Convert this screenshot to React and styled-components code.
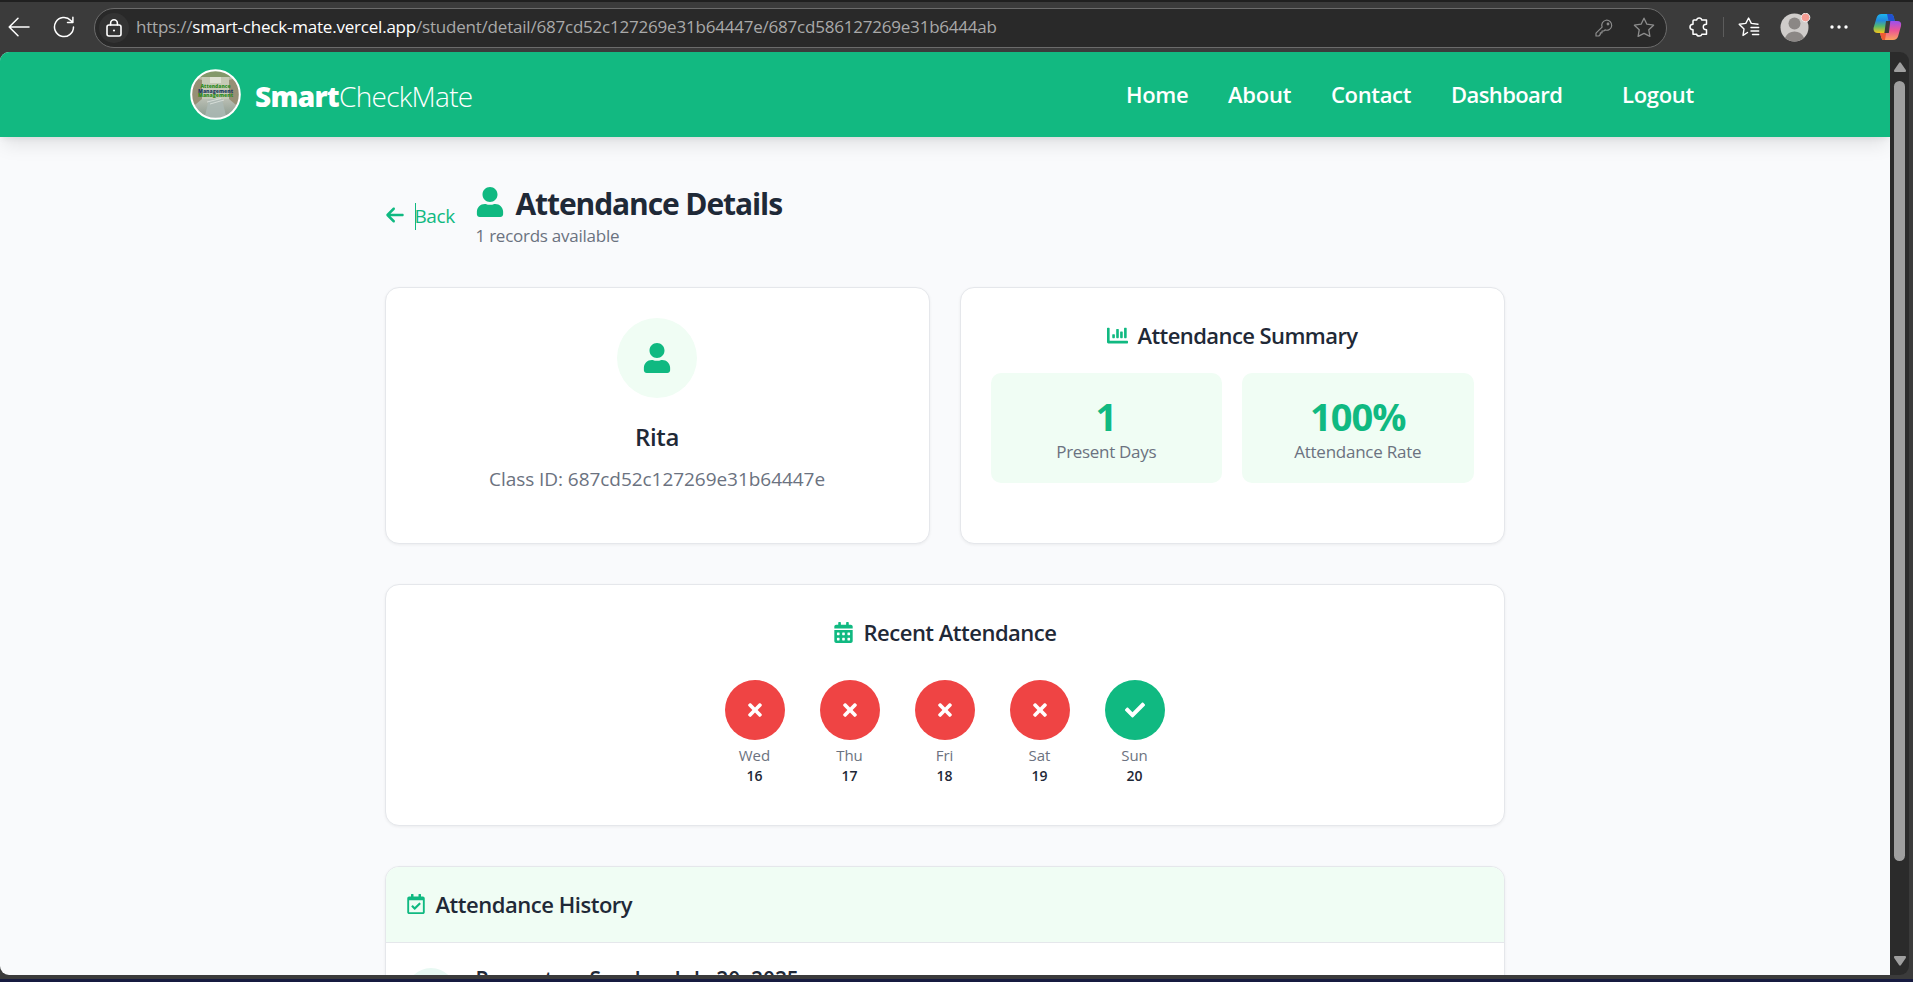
import React from "react";
import styled, { createGlobalStyle } from "styled-components";
import { FaUser, FaCheck, FaTimes, FaRegCalendarCheck, FaCalendarAlt, FaChartBar } from "react-icons/fa";
import { FaArrowLeft } from "react-icons/fa6";

const Global = createGlobalStyle`
  * { box-sizing: border-box; }
  body { margin: 0; background: #3b3b3b; overflow: hidden; }
  #root { font-family: "Open Sans", "Noto Sans", sans-serif; color: #1f2937; }
  h1, h2, h3, p { margin: 0; }
`;

const Text = styled.span`
  white-space: nowrap;
  letter-spacing: ${(p) => p.$ls || 0}px;
`;

const Window = styled.div`
  width: 1913px;
  height: 982px;
  display: flex;
  flex-direction: column;
  overflow: hidden;
  background: #3b3b3b;
`;

const Toolbar = styled.div`
  flex: none;
  height: 52px;
  display: flex;
  align-items: center;
  border-top: 2px solid #202020;
  background: #3b3b3b;
  color: #fff;
  svg { display: block; flex: none; }
`;

const BackButton = styled.div`
  margin-left: 8px;
  width: 45px;
`;

const ReloadButton = styled.div`
  width: 41px;
`;

const AddressBar = styled.div`
  width: 1573px;
  height: 40px;
  margin-top: 1px;
  border: 1px solid #6b6b6b;
  border-radius: 20px;
  background: #292929;
  display: flex;
  align-items: center;
  padding: 0 11px 0 4px;
`;

const LockBadge = styled.div`
  width: 30px;
  height: 30px;
  border-radius: 50%;
  background: #333;
  display: grid;
  place-items: center;
`;

const Url = styled.div`
  flex: 1;
  margin-left: 7px;
  padding-bottom: 2px;
  font-size: 17px;
  line-height: 24px;
  letter-spacing: -0.21px;
  color: #a9a9a9;
  white-space: nowrap;
  b { font-weight: 400; color: #fff; }
`;

const AddressIcons = styled.div`
  display: flex;
  align-items: center;
  gap: 20px;
`;

const ToolIcons = styled.div`
  display: flex;
  align-items: center;
  margin-left: 22px;
`;

const ToolButton = styled.div`
  margin-left: ${(p) => p.$gap || 0}px;
`;

const Divider = styled.div`
  width: 1px;
  height: 20px;
  background: #5c5c5c;
  margin: 0 14px;
`;

const Viewport = styled.div`
  flex: none;
  height: 923px;
  display: flex;
`;

const Page = styled.div`
  width: 1890px;
  height: 923px;
  background: #f9fafc;
  border-radius: 9px 0 0 9px;
  overflow: hidden;
`;

const Header = styled.header`
  height: 85px;
  padding: 0 195px 0 190px;
  background: #12b981;
  box-shadow: 0 10px 18px -3px rgba(0, 0, 0, 0.1), 0 4px 6px -2px rgba(0, 0, 0, 0.06);
  display: flex;
  align-items: center;
  justify-content: space-between;
`;

const Brand = styled.div`
  display: flex;
  align-items: center;
  gap: 14px;
`;

const BrandName = styled.div`
  font-size: 28px;
  line-height: 40px;
  color: #fff;
  font-weight: 300;
  white-space: nowrap;
  letter-spacing: -0.72px;
  padding-top: 3px;
  b { font-weight: 800; }
`;

const Nav = styled.nav`
  display: flex;
  color: #fff;
  font-size: 22px;
  font-weight: 600;
  gap: 40px;
  padding-bottom: 2px;
`;

const NavLink = styled.span`
  width: ${(p) => p.$w}px;
  margin-left: ${(p) => p.$gap || 0}px;
  letter-spacing: ${(p) => p.$ls || -0.35}px;
  white-space: nowrap;
`;

const Main = styled.main`
  width: 1120px;
  margin-left: 384.5px;
  padding-top: 46px;
`;

const TitleRow = styled.div`
  height: 104px;
  display: flex;
  align-items: flex-start;
`;

const BackLink = styled.a`
  width: 91px;
  padding-top: 19px;
  display: flex;
  align-items: center;
  color: #10b981;
  font-size: 19px;
  line-height: 27px;
  svg { margin-bottom: 2px; }
  span:last-child { padding-top: 1px; }
`;

const Caret = styled.span`
  width: 1px;
  height: 27px;
  margin: 0 -1px 0 10px;
  background: #10b981;
`;

const Title = styled.h1`
  display: flex;
  align-items: flex-start;
  height: 41px;
  font-size: 30px;
  line-height: 41px;
  font-weight: 700;
  svg { margin: 4px 11px 0 -1px; color: #10b981; }
`;

const Subtitle = styled.p`
  font-size: 17px;
  line-height: 24px;
  color: #6b7280;
`;

const Card = styled.section`
  background: #fff;
  border: 1px solid #e5e7eb;
  border-radius: 14px;
  box-shadow: 0 1px 3px rgba(0, 0, 0, 0.06);
  overflow: hidden;
`;

const TopCards = styled.div`
  display: grid;
  grid-template-columns: 1fr 1fr;
  gap: 30px;
  margin-bottom: 40px;
`;

const ProfileCard = styled(Card)`
  height: 257px;
  padding-top: 30px;
  display: flex;
  flex-direction: column;
  align-items: center;
`;

const Avatar = styled.div`
  width: 80px;
  height: 80px;
  border-radius: 50%;
  background: #f0fdf4;
  display: grid;
  place-items: center;
  color: #10b981;
`;

const Name = styled.h2`
  margin-top: 20px;
  font-size: 24px;
  line-height: 38px;
  font-weight: 600;
  letter-spacing: -0.4px;
`;

const ClassId = styled.p`
  margin-top: 8px;
  font-size: 19px;
  line-height: 30px;
  color: #6b7280;
`;

const SummaryCard = styled(Card)`
  height: 257px;
  padding: 29px 30px;
`;

const CardTitle = styled.h3`
  display: flex;
  justify-content: center;
  align-items: center;
  gap: 10px;
  height: 36px;
  font-size: 22px;
  line-height: 36px;
  font-weight: 600;
  svg { color: #10b981; flex: none; }
`;

const Stats = styled.div`
  display: grid;
  grid-template-columns: 1fr 1fr;
  gap: 20px;
  margin-top: 20px;
`;

const Stat = styled.div`
  height: 110px;
  border-radius: 10px;
  background: #f0fdf4;
  padding-top: 22px;
  text-align: center;
`;

const StatValue = styled.div`
  height: 44px;
  font-size: 38px;
  line-height: 42px;
  font-weight: 700;
  color: #10b981;
`;

const StatLabel = styled.div`
  font-size: 17px;
  line-height: 26px;
  color: #6b7280;
`;

const RecentCard = styled(Card)`
  height: 242px;
  padding-top: 29px;
  margin-bottom: 40px;
`;

const Days = styled.div`
  display: flex;
  justify-content: center;
  gap: 35px;
  margin-top: 30px;
`;

const Day = styled.div`
  width: 60px;
  text-align: center;
`;

const DayMark = styled.div`
  width: 60px;
  height: 60px;
  border-radius: 50%;
  display: grid;
  place-items: center;
  color: #fff;
  background: ${(p) => (p.$present ? "#10b981" : "#ef4444")};
`;

const DayName = styled.div`
  margin-top: 5px;
  font-size: 15px;
  line-height: 21px;
  color: #6b7280;
`;

const DayNumber = styled.div`
  font-size: 14px;
  line-height: 20px;
  font-weight: 600;
`;

const HistoryHead = styled.div`
  height: 76px;
  padding: 0 0 2px 20px;
  display: flex;
  align-items: center;
  background: #f0fdf4;
  border-bottom: 1px solid #e5e7eb;
`;

const HistoryRow = styled.div`
  height: 90px;
  padding: 25px 20px;
  display: flex;
  gap: 20px;
`;

const HistoryMark = styled.div`
  width: 50px;
  height: 50px;
  border-radius: 50%;
  background: #e7f8f2;
`;

const HistoryText = styled.div`
  margin-top: -3px;
  font-size: 21px;
  line-height: 28px;
  font-weight: 600;
  letter-spacing: -0.1px;
`;

const Scrollbar = styled.div`
  width: 19px;
  height: 923px;
  border-radius: 0 9px 9px 0;
  background: #2b2b2b;
  display: flex;
  flex-direction: column;
  align-items: center;
  padding: 10px 0 9px;
  svg { display: block; flex: none; }
`;

const Thumb = styled.div`
  width: 11px;
  height: 780px;
  margin: 9px 0 auto;
  border-radius: 6px;
  background: #9f9f9f;
`;

const Taskbar = styled.div`
  height: 3px;
  margin-top: auto;
  background: #171b40;
`;

const LogoImage = () => (
  <svg width="51" height="51" viewBox="0 0 51 51">
    <defs>
      <clipPath id="logo-clip"><circle cx="25.5" cy="25.5" r="24" /></clipPath>
      <linearGradient id="logo-floor" x1="0" y1="0" x2="0" y2="1">
        <stop offset="0" stopColor="#b9beb3" />
        <stop offset="1" stopColor="#84958a" />
      </linearGradient>
    </defs>
    <g clipPath="url(#logo-clip)">
      <rect width="51" height="51" fill="#b9b9a4" />
      <rect width="51" height="8" fill="#83986a" />
      <path d="M0 8L12 11V32L0 42Z" fill="#968f75" />
      <path d="M51 8L39 11V32L51 42Z" fill="#968f75" />
      <rect x="12" y="8" width="27" height="22" fill="#c6cab6" />
      <path d="M20 8H31V14H20Z" fill="#dde0d2" />
      <path d="M0 40L12 30H39L51 40V51H0Z" fill="url(#logo-floor)" />
      <path d="M19 30H32L37 51H14Z" fill="#adbab6" opacity=".8" />
      <path d="M17 33L31 29.5M20 35L34 31" stroke="#dfe5df" strokeWidth=".8" />
      <g textAnchor="middle" fontFamily="Open Sans" fontWeight="800" fontSize="5.4">
        <text x="25.5" y="19" fill="#2f8a22" textLength="30" lengthAdjust="spacingAndGlyphs">Attendance</text>
        <text x="25.5" y="23.6" fill="#1d3a5c" textLength="35" lengthAdjust="spacingAndGlyphs">Management</text>
        <text x="25.5" y="28" fill="#2f8a22" textLength="35" lengthAdjust="spacingAndGlyphs">Management</text>
      </g>
    </g>
    <circle cx="25.5" cy="25.5" r="24.3" fill="none" stroke="#fff" strokeWidth="2" />
  </svg>
);

const line = { fill: "none", stroke: "currentColor", strokeLinecap: "round", strokeLinejoin: "round" };

const CopilotIcon = () => (
  <svg width="29" height="28" viewBox="0 0 29 28">
    <defs>
      <linearGradient id="cp-a" x1="0" y1="0" x2="0" y2="1">
        <stop offset="0" stopColor="#1cb5ee" /><stop offset=".35" stopColor="#2389dd" />
        <stop offset=".65" stopColor="#58b96a" /><stop offset="1" stopColor="#f4c51c" />
      </linearGradient>
      <linearGradient id="cp-b" x1="0" y1="0" x2="0" y2="1">
        <stop offset="0" stopColor="#9b50ef" /><stop offset=".5" stopColor="#ee5594" />
        <stop offset="1" stopColor="#fca35f" />
      </linearGradient>
    </defs>
    <path d="M13 1H18Q20 1 20.7 3.5L21.7 8H18Q16 8 15.3 10L12 20H5Q0 20 .5 15L3.5 5Q4.6 1 8.5 1Z" fill="url(#cp-a)" />
    <path d="M14 1H18Q20 1 20.7 3.5L21.7 8H18Q16.6 8 15.8 9Z" fill="#2250cf" />
    <path d="M15 27H10.5Q9 27 8.3 24.5L7 20H11Q13 20 13.7 18L17 8H24Q29 8 28 13L25.2 23Q24 27 20 27Z" fill="url(#cp-b)" />
    <path d="M7 20H11Q12.6 20 13.3 19L12 27H10.5Q9 27 8.3 24.5Z" fill="#ee5a35" />
    <path d="M13 8H17.3L15.8 20H11.4Z" fill="#3b3b3b" />
  </svg>
);

const DAYS = [
  ["Wed", 16, false],
  ["Thu", 17, false],
  ["Fri", 18, false],
  ["Sat", 19, false],
  ["Sun", 20, true],
];

export default function App() {
  return (
    <Window>
      <Global />
      <Toolbar>
        <BackButton>
          <svg width="22" height="20" viewBox="0 0 22 20" {...line} strokeWidth="1.5"><path d="M21 10H1.5M10 1.2L1.2 10L10 18.8" /></svg>
        </BackButton>
        <ReloadButton>
          <svg width="22" height="22" viewBox="0 0 22 22" {...line} strokeWidth="1.5"><path d="M20.5 11A9.5 9.5 0 1 1 17.8 4.4L19.7 6.3M19.9 1.2V6.5H14.5" /></svg>
        </ReloadButton>
        <AddressBar>
          <LockBadge>
            <svg width="16" height="18" viewBox="0 0 16 18" {...line} strokeWidth="1.6"><rect x="1" y="6" width="14" height="11" rx="2" /><path d="M4.6 6V4.2a3.4 3.4 0 0 1 6.8 0V6" /><circle cx="8" cy="11.5" r="1.1" fill="currentColor" stroke="none" /></svg>
          </LockBadge>
          <Url>https://<b>smart-check-mate.vercel.app</b>/student/detail/687cd52c127269e31b64447e/687cd586127269e31b6444ab</Url>
          <AddressIcons>
            <svg width="18" height="18" viewBox="0 0 18 18" color="#8d8d8d" {...line} strokeWidth="1.2"><path d="M7.1 8.1A5 5 0 1 1 10 10.9L8.8 12H7V13.8H5.3V15.5L3.8 17H1V14.2Z" /><circle cx="13" cy="5" r=".8" fill="currentColor" /></svg>
            <svg width="22" height="21" viewBox="0 0 22 21" color="#8d8d8d" {...line} strokeWidth="1.3"><path d="M11 1.2L13.9 7.2L20.6 8.2L15.8 12.8L16.9 19.4L11 16.3L5.1 19.4L6.2 12.8L1.4 8.2L8.1 7.2Z" /></svg>
          </AddressIcons>
        </AddressBar>
        <ToolIcons>
          <svg width="20" height="20" viewBox="0 0 20 20" {...line} strokeWidth="1.5"><path d="M5 3H7.7Q8 1 10.2 1T12.7 3H17.5V7.3Q14.3 7.2 14.3 10T17.5 12.7V17.3H12.8Q12.5 19 10.2 19T7.7 17.3H4V12.7Q1 12.5 1 10T4 7.3V4Q4 3 5 3Z" /></svg>
          <Divider />
          <svg width="22" height="20" viewBox="0 0 22 20" {...line} strokeWidth="1.4"><path d="M9.5 15.5L5 18.4L6 12L1.2 7.2L7.8 6.4L10.6 1L13.3 6.4L20 7.2M13 10.5H20.7M13 14H20.7M14.5 17.5H20.7" /></svg>
          <ToolButton $gap={20}>
            <svg width="31" height="29" viewBox="0 0 31 29"><circle cx="14.5" cy="14.5" r="14" fill="#cfccca" /><circle cx="14.5" cy="10.5" r="6" fill="#8b8785" /><path d="M5 24.8Q8 18.5 14.5 18.5T24 24.8A14 14 0 0 1 5 24.8Z" fill="#8b8785" /><circle cx="25.5" cy="4.5" r="4.3" fill="#f59c93" stroke="#eee" /></svg>
          </ToolButton>
          <ToolButton $gap={19}>
            <svg width="18" height="4" viewBox="0 0 18 4" fill="#fff"><circle cx="2" cy="2" r="1.7" /><circle cx="9" cy="2" r="1.7" /><circle cx="16" cy="2" r="1.7" /></svg>
          </ToolButton>
          <ToolButton $gap={25}><CopilotIcon /></ToolButton>
        </ToolIcons>
      </Toolbar>
      <Viewport>
        <Page>
          <Header>
            <Brand>
              <LogoImage />
              <BrandName><b>Smart</b>CheckMate</BrandName>
            </Brand>
            <Nav>
              <NavLink $w={62}>Home</NavLink>
              <NavLink $w={63} $ls={-0.2}>About</NavLink>
              <NavLink $w={80}>Contact</NavLink>
              <NavLink $w={111} $ls={-0.6}>Dashboard</NavLink>
              <NavLink $w={73} $gap={20} $ls={-0.3}>Logout</NavLink>
            </Nav>
          </Header>
          <Main>
            <TitleRow>
              <BackLink><FaArrowLeft size={20} /><Caret /><Text $ls={-0.4}>Back</Text></BackLink>
              <div>
                <Title><FaUser size={30} /><Text $ls={-1.1}>Attendance Details</Text></Title>
                <Subtitle><Text $ls={-0.25}>1 records available</Text></Subtitle>
              </div>
            </TitleRow>
            <TopCards>
              <ProfileCard>
                <Avatar><FaUser size={30} /></Avatar>
                <Name>Rita</Name>
                <ClassId><Text $ls={-0.05}>Class ID: 687cd52c127269e31b64447e</Text></ClassId>
              </ProfileCard>
              <SummaryCard>
                <CardTitle><FaChartBar size={21} /><Text $ls={-0.58}>Attendance Summary</Text></CardTitle>
                <Stats>
                  <Stat><StatValue>1</StatValue><StatLabel><Text $ls={-0.3}>Present Days</Text></StatLabel></Stat>
                  <Stat><StatValue><Text $ls={-1}>100%</Text></StatValue><StatLabel><Text $ls={-0.25}>Attendance Rate</Text></StatLabel></Stat>
                </Stats>
              </SummaryCard>
            </TopCards>
            <RecentCard>
              <CardTitle><FaCalendarAlt size={21} /><Text $ls={-0.5}>Recent Attendance</Text></CardTitle>
              <Days>
                {DAYS.map(([name, n, present]) => (
                  <Day key={n}>
                    <DayMark $present={present}>{present ? <FaCheck size={20} /> : <FaTimes size={20} />}</DayMark>
                    <DayName>{name}</DayName>
                    <DayNumber>{n}</DayNumber>
                  </Day>
                ))}
              </Days>
            </RecentCard>
            <Card>
              <HistoryHead><CardTitle><FaRegCalendarCheck size={20} /><Text $ls={-0.47}>Attendance History</Text></CardTitle></HistoryHead>
              <HistoryRow><HistoryMark /><HistoryText>Present on Sunday, July 20, 2025</HistoryText></HistoryRow>
            </Card>
          </Main>
        </Page>
        <Scrollbar>
          <svg width="12" height="10" viewBox="0 0 12 10"><path d="M5 1Q6-.5 7 1L11.8 8Q12.5 10 11 10H1Q-.5 10 .2 8Z" fill="#9f9f9f" /></svg>
          <Thumb />
          <svg width="12" height="10" viewBox="0 0 12 10"><path d="M5 9Q6 10.5 7 9L11.8 2Q12.5 0 11 0H1Q-.5 0 .2 2Z" fill="#9f9f9f" /></svg>
        </Scrollbar>
      </Viewport>
      <Taskbar />
    </Window>
  );
}
